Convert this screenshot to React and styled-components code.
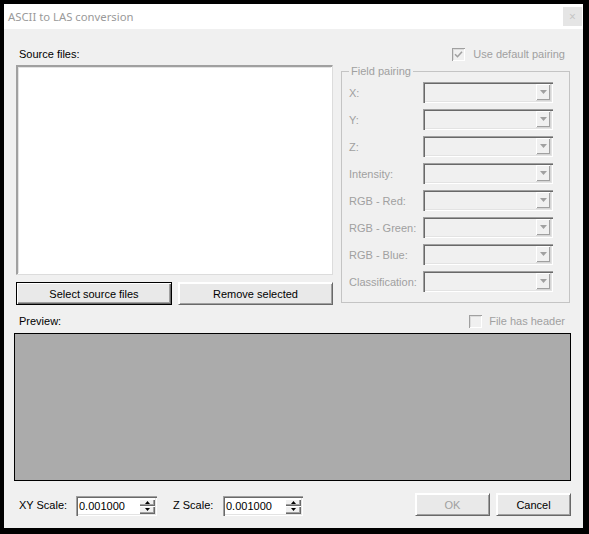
import React from 'react';
import styled, { createGlobalStyle } from 'styled-components';

const Global = createGlobalStyle`
  html, body { margin: 0; padding: 0; background: #000; }
  body { font-family: "Liberation Sans", Arial, sans-serif; font-size: 11px; color: #000; }
  #root { width: 589px; height: 534px; overflow: hidden; }
  * { box-sizing: border-box; }
`;

const DISABLED = '#a0a0a0';

const Window = styled.div`
  margin: 4px 0 0 4px;
  width: 579px;
  height: 524px;
  background: #f0f0f0;
  display: flex;
  flex-direction: column;
`;

const TitleBar = styled.div`
  height: 25px;
  flex: none;
  background: #fff;
  display: flex;
  align-items: center;
  justify-content: space-between;
  padding: 0 1px 0 4px;
`;

const Title = styled.span`
  font-family: "Noto Sans", "Open Sans", sans-serif;
  font-size: 11.3px;
  color: #9a9a9a;
`;

const CloseBox = styled.div`
  width: 19px;
  height: 19px;
  background: #e5e5e5;
  color: #c6c6c6;
  display: flex;
  align-items: center;
  justify-content: center;
  font-family: "Noto Sans", sans-serif;
  font-size: 12px;
`;

const Client = styled.div`
  flex: 1;
  display: flex;
  flex-direction: column;
  padding: 15px 12px 0 10px;
`;

const TopSection = styled.div`
  height: 261px;
  display: flex;
`;

const LeftCol = styled.div`
  margin-left: 2px;
  width: 317px;
  display: flex;
  flex-direction: column;
`;

const RightCol = styled.div`
  margin-left: 8px;
  width: 229px;
  display: flex;
  flex-direction: column;
`;

const SectionLabel = styled.div`
  height: ${p => p.$h || 21}px;
  display: flex;
  align-items: center;
  padding-left: ${p => p.$indent || 3}px;
  line-height: 13px;
`;

const ListBox = styled.div`
  height: 210px;
  background: #fff;
  box-shadow: inset 1px 1px #a0a0a0, inset -1px -1px #fff, inset 2px 2px #e3e3e3;
  border: 1px solid #a0a0a0;
  border-right-color: #dcdcdc;
  border-bottom-color: #dcdcdc;
`;

const ButtonRow = styled.div`
  margin-top: 7px;
  display: flex;
  gap: 6px;
`;

const Button = styled.button`
  width: ${p => p.$w}px;
  height: 23px;
  padding: 0;
  font-family: "Liberation Sans", Arial, sans-serif;
  font-size: 11px;
  color: ${p => (p.disabled ? DISABLED : '#000')};
  background: #e9e9e9;
  border: 1px solid ${p => (p.$default ? '#000' : '#f0f0f0')};
  box-shadow: ${p =>
    p.$default
      ? 'inset 1px 1px #fff, inset -1px -1px #696969, inset -2px -2px #a0a0a0'
      : 'inset 1px 1px #fff, inset -1px -1px #a0a0a0'};
  ${p => (!p.$default ? 'border-top-color:#fff; border-left-color:#fff; border-right-color:#696969; border-bottom-color:#696969;' : '')}
  cursor: default;
`;

const CheckRow = styled.div`
  height: ${p => p.$h || 21}px;
  display: flex;
  align-items: center;
  justify-content: flex-end;
  padding-right: ${p => p.$pr || 5}px;
  color: ${DISABLED};
  line-height: 13px;
`;

const CheckBox = styled.span`
  width: 13px;
  height: 13px;
  margin-right: ${p => p.$mr || 8}px;
  background: #f0f0f0;
  box-shadow: inset 1px 1px #a0a0a0, inset -1px -1px #fff, inset 2px 2px #dcdcdc;
  display: flex;
  align-items: center;
  justify-content: center;
`;

const GroupBox = styled.fieldset`
  height: 238px;
  margin: 0;
  padding: 4px 0 0 7px;
  border: 1px solid #c4c4c4;
  border-radius: 0;
  display: flex;
  flex-direction: column;
  gap: 6px;
`;

const Legend = styled.legend`
  padding: 0 2px;
  margin-left: 0;
  line-height: 13px;
  color: ${DISABLED};
`;

const FieldRow = styled.div`
  height: 21px;
  display: flex;
  align-items: center;
`;

const FieldLabel = styled.span`
  width: 74px;
  color: ${DISABLED};
`;

const Combo = styled.div`
  width: 130px;
  height: 21px;
  background: #f0f0f0;
  box-shadow: inset 1px 1px #a0a0a0, inset 2px 2px #696969, inset -1px -1px #fff, inset -2px -2px #e3e3e3;
  display: flex;
  justify-content: flex-end;
  align-items: center;
  padding-right: 2px;
`;

const DropButton = styled.span`
  width: 15px;
  height: 17px;
  background: #f0f0f0;
  box-shadow: inset 1px 1px #fff, inset -1px -1px #a0a0a0;
  border-right: 1px solid #d6d6d6;
  border-bottom: 1px solid #d6d6d6;
  display: flex;
  align-items: center;
  justify-content: center;
`;

const PreviewHeader = styled.div`
  height: 28px;
  padding-top: 4px;
  display: flex;
  align-items: center;
  justify-content: space-between;
`;

const PreviewPanel = styled.div`
  height: 148px;
  background: #ababab;
  border: 1px solid #000;
`;

const BottomRow = styled.div`
  margin-top: 12px;
  height: 23px;
  display: flex;
  align-items: center;
`;

const ScaleLabel = styled.span`
  width: ${p => p.$w}px;
  margin-left: ${p => p.$ml}px;
  padding-top: 1px;
`;

const NumBox = styled.div`
  width: ${p => p.$w}px;
  height: 20px;
  margin-top: 3px;
  background: #fff;
  box-shadow: inset 1px 1px #a0a0a0, inset 2px 2px #696969, inset -1px -1px #fff, inset -2px -2px #e3e3e3;
  display: flex;
  align-items: center;
  padding: 0 2px 0 3px;
`;

const NumValue = styled.span`
  flex: 1;
  font-size: 11px;
  line-height: 13px;
  padding-top: 1px;
`;

const Spinner = styled.div`
  width: 16px;
  height: 15px;
  display: flex;
  flex-direction: column;
`;

const SpinHalf = styled.span`
  flex: 1;
  background: #f0f0f0;
  box-shadow: inset 1px 1px #fff, inset -1px -1px #696969, inset -2px -2px #a0a0a0;
  display: flex;
  align-items: center;
  justify-content: center;
`;

const PushRight = styled.div`
  margin-left: auto;
  display: flex;
  gap: 6px;
`;

const Arrow = ({ color = '#a0a0a0', up, w = 7, h = 4 }) => (
  <svg width={w} height={h} viewBox={`0 0 ${w} ${h}`}>
    {up ? (
      <polygon points={`${w / 2},0 ${w},${h} 0,${h}`} fill={color} />
    ) : (
      <polygon points={`0,0 ${w},0 ${w / 2},${h}`} fill={color} />
    )}
  </svg>
);

const Check = () => (
  <svg width="9" height="9" viewBox="0 0 9 9">
    <path d="M1 4.2 L3.5 6.7 L8 1.8" stroke="#a0a0a0" strokeWidth="1.6" fill="none" />
  </svg>
);

const fields = ['X:', 'Y:', 'Z:', 'Intensity:', 'RGB - Red:', 'RGB - Green:', 'RGB - Blue:', 'Classification:'];

const NumericUpDown = ({ w, value }) => (
  <NumBox $w={w}>
    <NumValue>{value}</NumValue>
    <Spinner>
      <SpinHalf><Arrow up color="#000" w={5} h={3} /></SpinHalf>
      <SpinHalf><Arrow color="#000" w={5} h={3} /></SpinHalf>
    </Spinner>
  </NumBox>
);

export default function App() {
  return (
    <>
      <Global />
      <Window>
        <TitleBar>
          <Title>ASCII to LAS conversion</Title>
          <CloseBox>×</CloseBox>
        </TitleBar>
        <Client>
          <TopSection>
            <LeftCol>
              <SectionLabel>Source files:</SectionLabel>
              <ListBox />
              <ButtonRow>
                <Button $w={156} $default>Select source files</Button>
                <Button $w={155}>Remove selected</Button>
              </ButtonRow>
            </LeftCol>
            <RightCol>
              <CheckRow>
                <CheckBox><Check /></CheckBox>
                Use default pairing
              </CheckRow>
              <GroupBox>
                <Legend>Field pairing</Legend>
                {fields.map(f => (
                  <FieldRow key={f}>
                    <FieldLabel>{f}</FieldLabel>
                    <Combo>
                      <DropButton><Arrow /></DropButton>
                    </Combo>
                  </FieldRow>
                ))}
              </GroupBox>
            </RightCol>
          </TopSection>
          <PreviewHeader>
            <SectionLabel $indent={5} $h={24}>Preview:</SectionLabel>
            <CheckRow $pr={6} $h={24}>
              <CheckBox $mr={7} />
              File has header
            </CheckRow>
          </PreviewHeader>
          <PreviewPanel />
          <BottomRow>
            <ScaleLabel $w={57} $ml={5}>XY Scale:</ScaleLabel>
            <NumericUpDown w={81} value="0.001000" />
            <ScaleLabel $w={50} $ml={16}>Z Scale:</ScaleLabel>
            <NumericUpDown w={80} value="0.001000" />
            <PushRight>
              <Button $w={75} disabled>OK</Button>
              <Button $w={75}>Cancel</Button>
            </PushRight>
          </BottomRow>
        </Client>
      </Window>
    </>
  );
}
